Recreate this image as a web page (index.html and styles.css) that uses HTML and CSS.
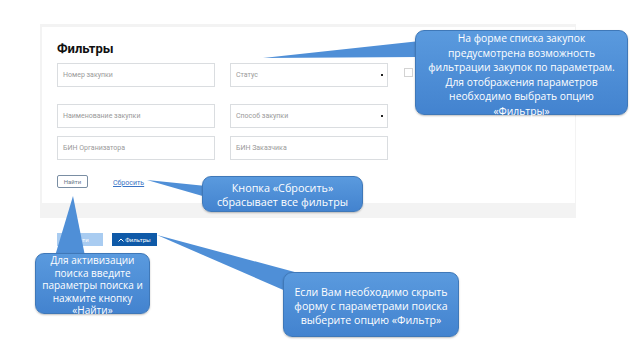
FILE: index.html
```html
<!DOCTYPE html>
<html lang="ru">
<head>
<meta charset="utf-8">
<title>Фильтры</title>
<link rel="stylesheet" href="styles.css">
</head>
<body>
<div class="page">
  <div class="panel">
    <div class="card">
      <h2 class="title">Фильтры</h2>
      <div class="row row-1">
        <div class="field">Номер закупки</div>
        <div class="field select">Статус<span class="caret"></span></div>
        <span class="check"></span>
      </div>
      <div class="row row-2">
        <div class="field">Наименование закупки</div>
        <div class="field select">Способ закупки<span class="caret"></span></div>
      </div>
      <div class="row row-3">
        <div class="field">БИН Организатора</div>
        <div class="field">БИН Заказчика</div>
      </div>
      <div class="actions">
        <span class="btn-outline">Найти</span>
        <a class="link">Сбросить</a>
      </div>
    </div>
  </div>
  <div class="toolbar">
    <span class="btn-light">Найти</span>
    <span class="btn-dark"><svg class="chev" width="6" height="4" viewBox="0 0 6 4"><polyline points="0.5,3.5 3,1 5.5,3.5" /></svg>Фильтры</span>
  </div>
</div>

<svg class="pointers" width="640" height="360" viewBox="0 0 640 360">
  <polygon points="263,58 420,41 420,57" />
  <polygon points="147,180 206,186 206,197" />
  <polygon points="73,196 55,256 85,256" />
  <polygon points="157,235 302,274 288,292" />
</svg>

<div class="callout c1">На форме списка закупок<br>предусмотрена возможность<br>фильтрации закупок по параметрам.<br>Для отображения параметров<br>необходимо выбрать опцию<br>«Фильтры»</div>
<div class="callout c2">Кнопка «Сбросить»<br>сбрасывает все фильтры</div>
<div class="callout c3">Для активизации<br>поиска введите<br>параметры поиска и<br>нажмите кнопку<br>«Найти»</div>
<div class="callout c4">Если Вам необходимо скрыть<br>форму с параметрами поиска<br>выберите опцию «Фильтр»</div>
</body>
</html>
```

FILE: styles.css
```css
* { box-sizing: border-box; }
html, body { margin: 0; padding: 0; background: #fff; }
body {
  width: 640px;
  height: 360px;
  overflow: hidden;
  position: relative;
  font-family: Roboto, "Liberation Sans", sans-serif;
}
.page { padding: 24px 0 0 40px; }
.panel {
  width: 536px;
  background: #f3f3f3;
  padding: 3px 1px 15px 2px;
}
.card {
  background: #fff;
  padding: 14px 15px 15px;
}
.title {
  margin: 0 0 6px;
  font-size: 13px;
  line-height: 16px;
  font-weight: 700;
  color: #111;
}
.row { display: flex; align-items: flex-start; gap: 15px; }
.row-1 { margin-bottom: 17px; }
.row-2 { margin-bottom: 8px; }
.row-3 { margin-bottom: 15px; }
.field {
  width: 158px;
  height: 24px;
  border: 1px solid #dadde0;
  padding-left: 5px;
  font-size: 7px;
  line-height: 22px;
  color: #9a9a9a;
  position: relative;
}
.select .caret {
  position: absolute;
  right: 4px;
  top: 10px;
  width: 2px;
  height: 2px;
  background: #222;
}
.check {
  width: 9px;
  height: 9px;
  border: 1px solid #d3d3d3;
  margin-top: 5px;
  margin-left: 1px;
}
.actions { display: flex; align-items: center; gap: 25px; }
.btn-outline {
  width: 31px;
  height: 13px;
  border: 1px solid #7a8ea3;
  border-radius: 2px;
  font-size: 6px;
  line-height: 11px;
  text-align: center;
  color: #6a7888;
}
.link {
  font-size: 7px;
  color: #3a73c4;
  text-decoration: underline;
  margin-top: 2px;
}
.toolbar {
  display: flex;
  gap: 9px;
  padding: 15px 0 0 17px;
}
.btn-light, .btn-dark {
  height: 13px;
  font-size: 6px;
  line-height: 13px;
  color: #fff;
  text-align: center;
  display: flex;
  align-items: center;
  justify-content: center;
}
.btn-light { width: 46px; background: #a9ccf1; }
.btn-dark { width: 45px; background: #0f5aa8; }
.chev { margin-right: 1px; }
.chev polyline { fill: none; stroke: #fff; stroke-width: 1; }

.pointers {
  position: absolute;
  left: 0;
  top: 0;
  pointer-events: none;
}
.pointers polygon { fill: #4f8fd7; }

.callout {
  position: absolute;
  background: linear-gradient(#5a9ade, #4383cf);
  border: 1px solid #3f78b8;
  border-radius: 9px;
  color: #fff;
  font-family: "Open Sans", "Liberation Sans", sans-serif;
  text-align: center;
  box-shadow: 0 1px 2px rgba(0,0,0,0.25);
}
.c1 {
  left: 415px; top: 30px; width: 213px; height: 85px;
  font-size: 10.3px; line-height: 14.6px; padding-top: 0;
}
.c2 {
  left: 202px; top: 176px; width: 161px; height: 36px;
  font-size: 10.8px; line-height: 14px; padding-top: 4px;
}
.c3 {
  left: 35px; top: 253px; width: 115px; height: 61px;
  font-size: 10px; line-height: 12.6px; padding-top: 0;
}
.c4 {
  left: 283px; top: 272px; width: 176px; height: 65px;
  font-size: 10.6px; line-height: 14px; padding-top: 12px;
}
```
